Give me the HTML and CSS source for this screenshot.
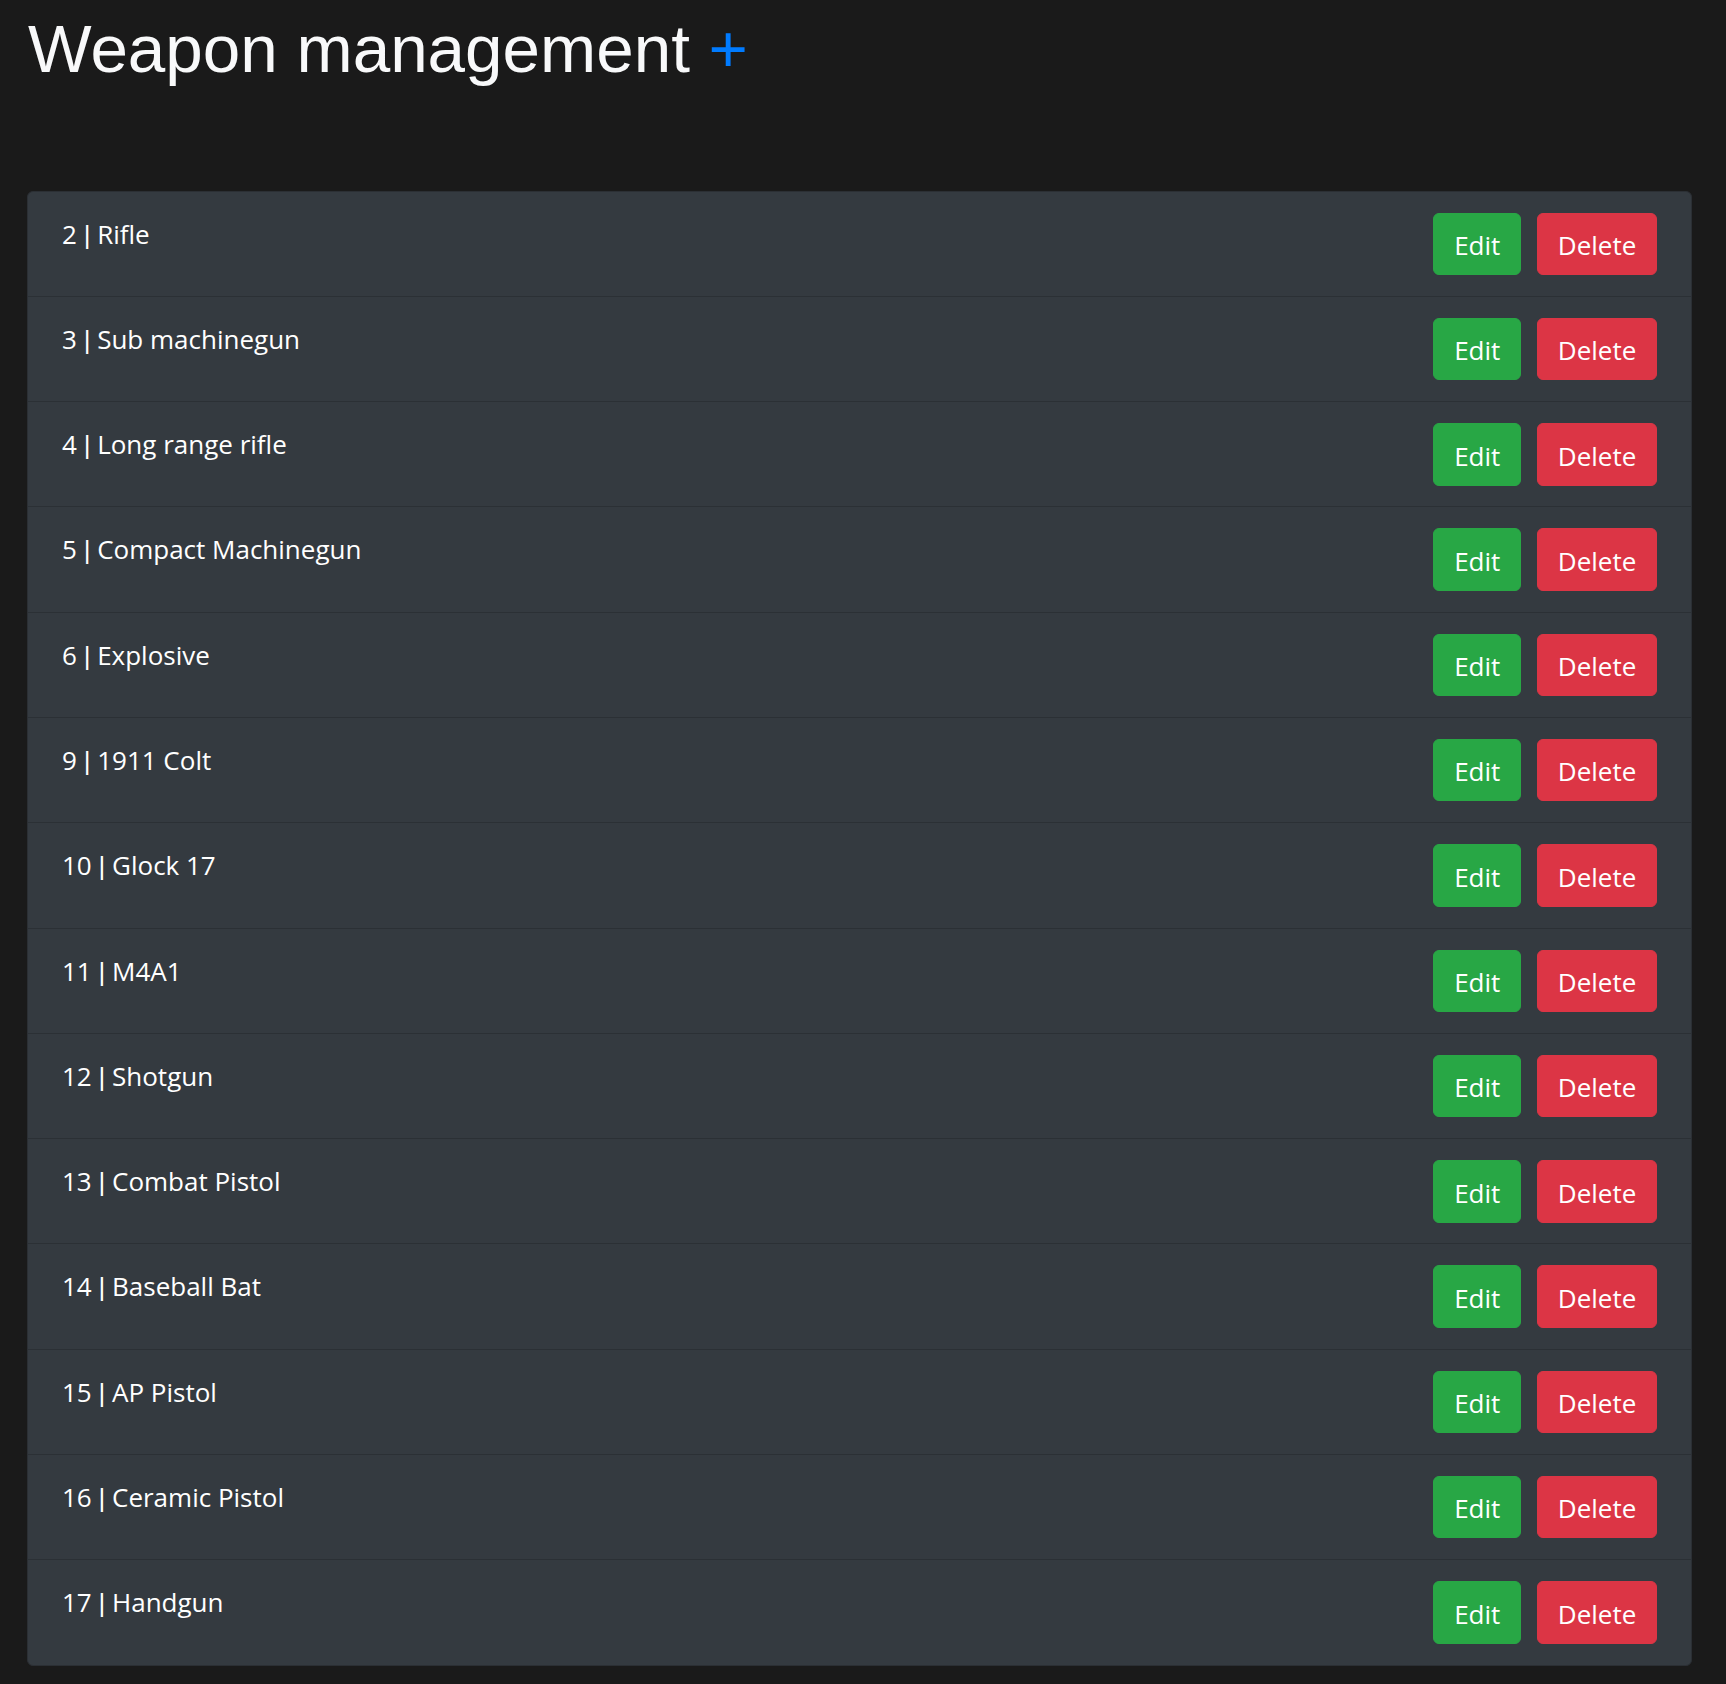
FILE: index.html
```html
<!DOCTYPE html>
<html lang="en">
<head>
<meta charset="utf-8">
<title>Weapon management</title>
<link rel="stylesheet" href="styles.css">
</head>
<body>
<h1 class="title">Weapon management <span class="add">+</span></h1>
<ul class="list">
  <li class="row"><span class="name">2 <span class="sep">|</span> Rifle</span><div class="actions"><button class="btn edit">Edit</button><button class="btn del">Delete</button></div></li>
  <li class="row"><span class="name">3 <span class="sep">|</span> Sub machinegun</span><div class="actions"><button class="btn edit">Edit</button><button class="btn del">Delete</button></div></li>
  <li class="row"><span class="name">4 <span class="sep">|</span> Long range rifle</span><div class="actions"><button class="btn edit">Edit</button><button class="btn del">Delete</button></div></li>
  <li class="row"><span class="name">5 <span class="sep">|</span> Compact Machinegun</span><div class="actions"><button class="btn edit">Edit</button><button class="btn del">Delete</button></div></li>
  <li class="row"><span class="name">6 <span class="sep">|</span> Explosive</span><div class="actions"><button class="btn edit">Edit</button><button class="btn del">Delete</button></div></li>
  <li class="row"><span class="name">9 <span class="sep">|</span> 1911 Colt</span><div class="actions"><button class="btn edit">Edit</button><button class="btn del">Delete</button></div></li>
  <li class="row"><span class="name">10 <span class="sep">|</span> Glock 17</span><div class="actions"><button class="btn edit">Edit</button><button class="btn del">Delete</button></div></li>
  <li class="row"><span class="name">11 <span class="sep">|</span> M4A1</span><div class="actions"><button class="btn edit">Edit</button><button class="btn del">Delete</button></div></li>
  <li class="row"><span class="name">12 <span class="sep">|</span> Shotgun</span><div class="actions"><button class="btn edit">Edit</button><button class="btn del">Delete</button></div></li>
  <li class="row"><span class="name">13 <span class="sep">|</span> Combat Pistol</span><div class="actions"><button class="btn edit">Edit</button><button class="btn del">Delete</button></div></li>
  <li class="row"><span class="name">14 <span class="sep">|</span> Baseball Bat</span><div class="actions"><button class="btn edit">Edit</button><button class="btn del">Delete</button></div></li>
  <li class="row"><span class="name">15 <span class="sep">|</span> AP Pistol</span><div class="actions"><button class="btn edit">Edit</button><button class="btn del">Delete</button></div></li>
  <li class="row"><span class="name">16 <span class="sep">|</span> Ceramic Pistol</span><div class="actions"><button class="btn edit">Edit</button><button class="btn del">Delete</button></div></li>
  <li class="row"><span class="name">17 <span class="sep">|</span> Handgun</span><div class="actions"><button class="btn edit">Edit</button><button class="btn del">Delete</button></div></li>
</ul>
</body>
</html>
```
FILE: styles.css
```css
html, body {
  margin: 0;
  background: #1a1a1a;
}
body {
  padding: 8px 34px 19px 27px;
  font-family: "Open Sans", "Noto Sans", sans-serif;
  color: #f8f9fa;
}
.title {
  margin: 0 0 101px 1px;
  font-family: "Liberation Sans", Arial, sans-serif;
  font-weight: 400;
  font-size: 67.4px;
  line-height: 81.6px;
  color: #f8f9fa;
}
.add {
  color: #007bff;
}
.list {
  list-style: none;
  margin: 0;
  padding: 0;
  background: #343a40;
  border: 1px solid #2b2f34;
  border-radius: 6px;
}
.row {
  display: flex;
  justify-content: space-between;
  align-items: flex-start;
  padding: 21px 34px 20.9px 34px;
  border-bottom: 1px solid #2b3035;
}
.row:last-child {
  border-bottom: none;
}
.name {
  margin-top: 2px;
  font-size: 26px;
  line-height: 39px;
  color: #fff;
}
.sep {
  font-family: "Liberation Sans", Arial, sans-serif;
}
.actions {
  display: flex;
  gap: 16px;
}
.btn {
  font-family: "Open Sans", "Noto Sans", sans-serif;
  font-size: 26px;
  line-height: 39px;
  padding: 12.4px 19.7px 9px 19.8px;
  border: 1px solid transparent;
  border-radius: 6px;
  color: #fff;
  cursor: pointer;
}
.edit {
  background: #28a745;
  border-color: #28a745;
}
.del {
  background: #dc3545;
  border-color: #dc3545;
}
```
